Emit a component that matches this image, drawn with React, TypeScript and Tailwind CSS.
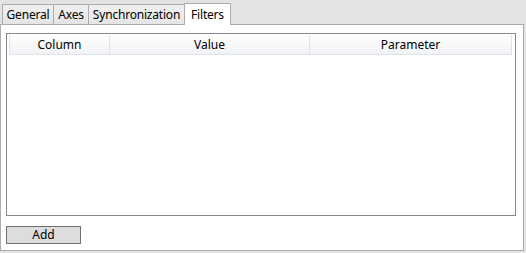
const tabs = [
  { label: "General", width: "w-[52px]" },
  { label: "Axes", width: "w-[36px]" },
  { label: "Synchronization", width: "w-[97px]" },
  { label: "Filters", width: "w-[47px]" },
];

const columns = [
  { label: "Column", width: "w-[101px]" },
  { label: "Value", width: "w-[200px]" },
  { label: "Parameter", width: "w-[202px]" },
];

export default function App() {
  const active = "Filters";

  return (
    <div className="w-[526px] h-[253px] bg-[#e3e3e3] font-['Segoe_UI','Noto_Sans',sans-serif] text-[12px] text-black overflow-hidden">
      {/* tab strip */}
      <div className="flex items-end h-[24px] pl-[2px] pt-[3px]">
        {tabs.map((t) =>
          t.label === active ? (
            <div
              key={t.label}
              className={`${t.width} relative z-10 -mb-px h-[22px] flex justify-center items-start pt-[2px] bg-white border border-b-0 border-[#acacac] -ml-px tracking-[-0.2px]`}
            >
              {t.label}
            </div>
          ) : (
            <div
              key={t.label}
              className={`${t.width} h-[20px] flex justify-center items-start pt-[1px] bg-gradient-to-b from-[#f0f0f0] to-[#e5e5e5] border border-b-0 border-[#acacac] -ml-px first:ml-0 leading-[17px] tracking-[-0.2px]`}
            >
              {t.label}
            </div>
          )
        )}
      </div>

      {/* tab content */}
      <div className="w-[524px] h-[227px] bg-white border border-[#acacac] pl-[5px] pt-[8px] flex flex-col">
        <div className="w-[510px] h-[183px] border border-[#828790] pl-[2px] pt-px">
          <div className="flex h-[20px] w-[503px] bg-gradient-to-b from-white to-[#f1f2f4] border-b border-[#e2e3ea]">
            {columns.map((c, i) => (
              <div
                key={c.label}
                className={`${c.width} flex items-center justify-center border-[#e2e3ea] ${
                  i === 0 ? "border-l" : ""
                } border-r`}
              >
                {c.label}
              </div>
            ))}
          </div>
        </div>
        <button className="mt-[10px] w-[75px] h-[18px] bg-[#dddddd] border border-[#707070] flex items-center justify-center leading-none">
          Add
        </button>
      </div>
    </div>
  );
}
